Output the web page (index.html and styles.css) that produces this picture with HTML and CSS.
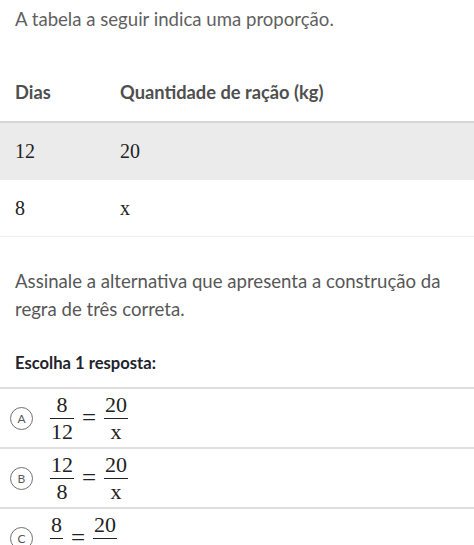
FILE: index.html
```html
<!DOCTYPE html>
<html lang="pt">
<head>
<meta charset="utf-8">
<link rel="stylesheet" href="styles.css">
</head>
<body>
<p class="intro">A tabela a seguir indica uma proporção.</p>
<div class="table">
  <div class="row head"><span>Dias</span><span>Quantidade de ração (kg)</span></div>
  <div class="row body shade"><span>12</span><span>20</span></div>
  <div class="row body"><span>8</span><span>x</span></div>
</div>
<p class="question">Assinale a alternativa que apresenta a construção da regra de três correta.</p>
<p class="choose">Escolha 1 resposta:</p>
<div class="options">
  <div class="option">
    <span class="letter">A</span>
    <span class="math">
      <span class="frac"><span class="num">8</span><span class="den">12</span></span>
      <span class="eq">=</span>
      <span class="frac"><span class="num">20</span><span class="den">x</span></span>
    </span>
  </div>
  <div class="option">
    <span class="letter">B</span>
    <span class="math">
      <span class="frac"><span class="num">12</span><span class="den">8</span></span>
      <span class="eq">=</span>
      <span class="frac"><span class="num">20</span><span class="den">x</span></span>
    </span>
  </div>
  <div class="option">
    <span class="letter">C</span>
    <span class="math">
      <span class="frac"><span class="num">8</span><span class="den">x</span></span>
      <span class="eq">=</span>
      <span class="frac"><span class="num">20</span><span class="den">12</span></span>
    </span>
  </div>
</div>
</body>
</html>
```
FILE: styles.css
```css
html, body {
  margin: 0;
  padding: 0;
  background: #fff;
}
body {
  font-family: Lato, "Open Sans", sans-serif;
  overflow: hidden;
}
.intro {
  margin: 0;
  padding: 7px 15px 0;
  font-size: 18.6px;
  line-height: 24px;
  color: #5f5f5f;
}
.table {
  margin-top: 31px;
}
.row {
  display: grid;
  grid-template-columns: 105px 1fr;
  align-items: center;
  padding-left: 15px;
}
.head {
  height: 59px;
  border-bottom: 2px solid #d6d6d6;
  font-weight: 700;
  font-size: 18.3px;
  color: #4f4f4f;
}
.body {
  height: 56px;
  font-family: "Liberation Serif", "DejaVu Serif", serif;
  font-size: 20px;
  color: #222;
  border-bottom: 1px solid #f0f0f0;
}
.shade {
  background: #ebebeb;
  border-bottom: none;
  height: 57px;
}
.question {
  margin: 30px 0 0;
  padding: 0 15px;
  font-size: 18.6px;
  line-height: 28px;
  color: #575757;
}
.choose {
  margin: 28px 0 0;
  padding: 0 15px 12px;
  font-size: 16.6px;
  line-height: 24px;
  font-weight: 700;
  color: #21242c;
}
.options {
  border-top: 2px solid #dedede;
}
.option {
  display: flex;
  align-items: center;
  height: 58px;
  padding-left: 10px;
  border-bottom: 2px solid #dedede;
}
.letter {
  box-sizing: border-box;
  width: 23px;
  height: 23px;
  border: 1.5px solid #707070;
  border-radius: 50%;
  display: flex;
  align-items: center;
  justify-content: center;
  font-size: 12px;
  color: #5a5a5a;
  flex: none;
}
.math {
  display: flex;
  align-items: center;
  margin-left: 17px;
  font-family: "Liberation Serif", "DejaVu Serif", serif;
  font-size: 22px;
  color: #222;
}
.frac {
  display: inline-flex;
  flex-direction: column;
  align-items: center;
  line-height: 20px;
}
.num {
  padding: 0 1px 3px;
}
.den {
  align-self: stretch;
  text-align: center;
  border-top: 1px solid #222;
  padding: 3px 1px 0;
}
.eq {
  margin: 0 8px;
  font-size: 25px;
  line-height: 20px;
}
```
